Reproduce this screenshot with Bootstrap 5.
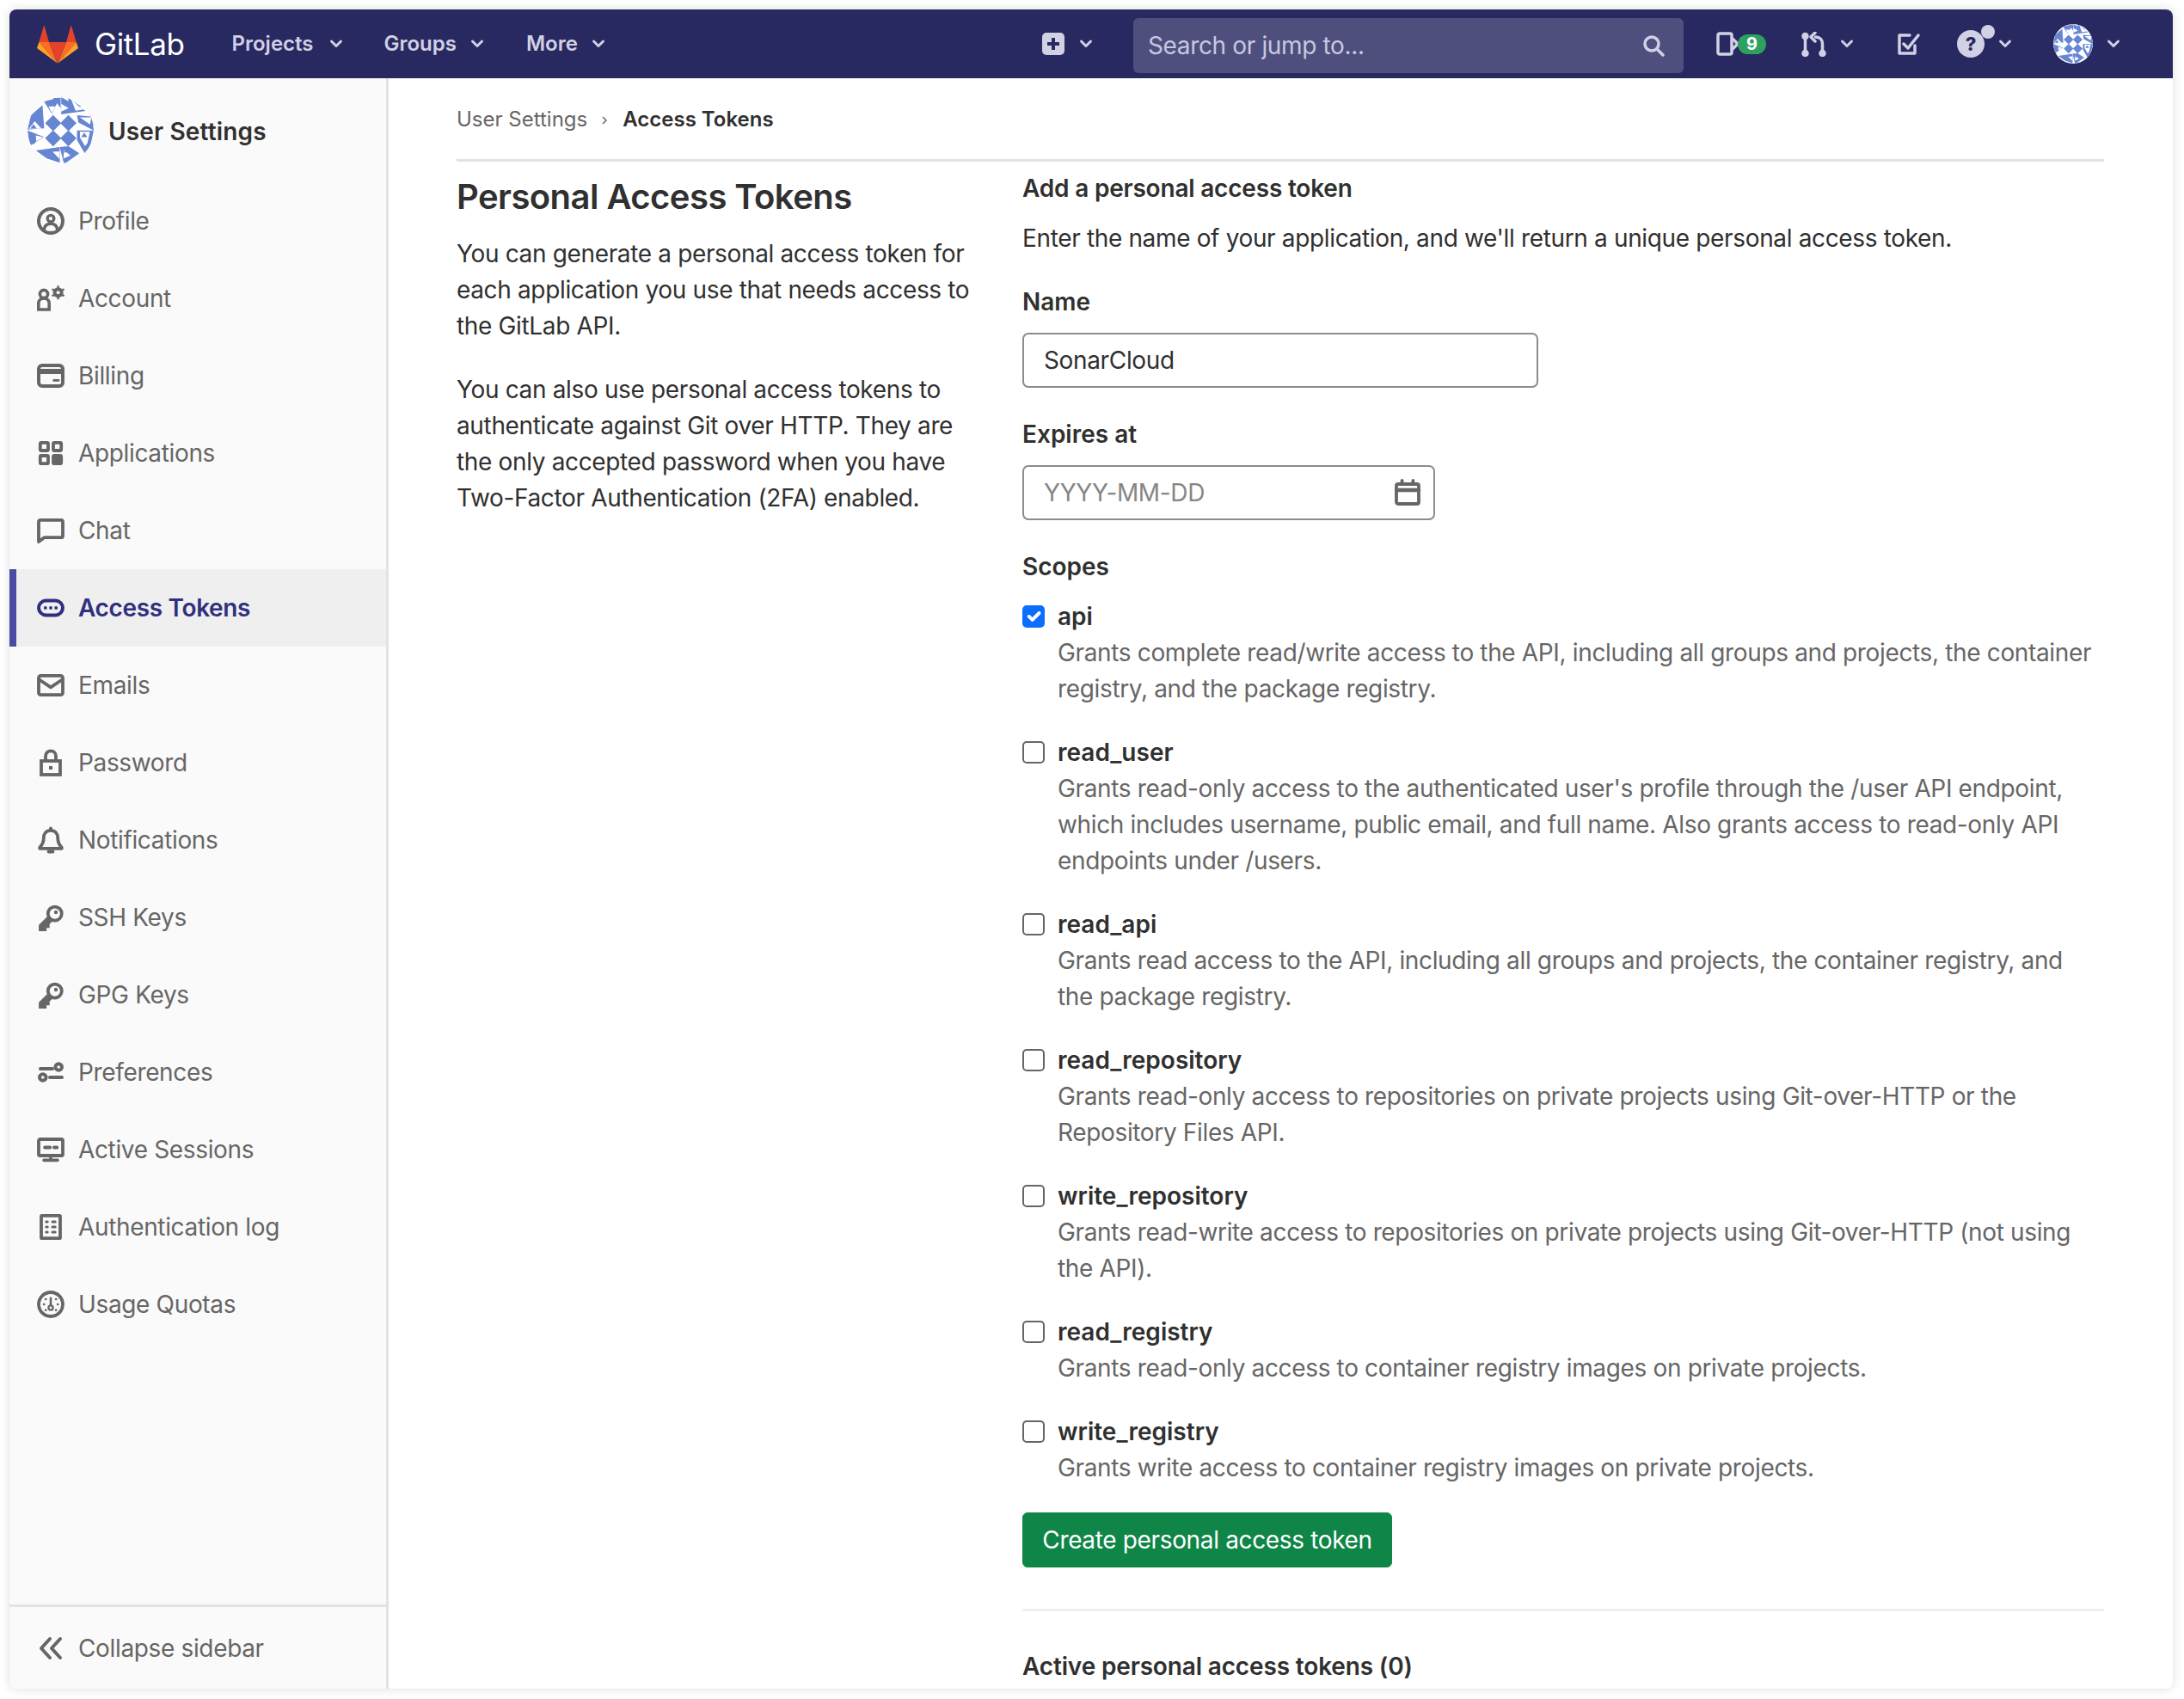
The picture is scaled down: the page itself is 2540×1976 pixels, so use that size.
<!DOCTYPE html>
<html lang="en">
<head>
<meta charset="utf-8">
<title>Personal Access Tokens</title>
<link rel="stylesheet" href="https://cdn.jsdelivr.net/npm/bootstrap@5.3.0/dist/css/bootstrap.min.css">
<style>
html,body{height:100%;margin:0;background:#fff;overflow:hidden}
body{font-family:Inter,"Liberation Sans",sans-serif;font-size:28px;line-height:42px;letter-spacing:-.35px;color:#303030;padding:11px 13px 12px 11px}
.gl-window{height:100%;display:flex;flex-direction:column;background:#fff;border-radius:8px;overflow:hidden;box-shadow:0 0 12px rgba(0,0,0,.14)}
.gl-nav{height:80px;flex:none;background:#292961;color:#d1d0e4;padding:0;flex-wrap:nowrap;justify-content:flex-start;font-size:24px;font-weight:600;line-height:32px;letter-spacing:0}
.gl-brand{display:flex;align-items:center;margin-left:32px;color:#fff;text-decoration:none}
.gl-brand span{font-size:35px;font-weight:400;margin-left:19px;letter-spacing:-.4px}
.gl-menu{display:flex;align-items:center;text-decoration:none;color:#d1d0e4}
.gl-chev{width:16px;height:16px;flex:none;fill:none;stroke:currentColor;stroke-width:3;stroke-linecap:round;stroke-linejoin:round}
.gl-search{width:640px;height:64px;margin-top:4px;background:#4f4f7e;border-radius:6px;display:flex;align-items:center;padding:0 22px 0 17px;flex:none}
.gl-search input{flex:1;min-width:0;border:0;background:transparent;font-size:28px;letter-spacing:-.35px;color:#d1d0e4;padding:0;outline:0}
.gl-search input::placeholder{color:#c8c7e0;opacity:1}
.gl-nicon{fill:none;stroke:currentColor;stroke-linecap:round;stroke-linejoin:round;flex:none}
.gl-badge{width:33px;height:23px;border-radius:12px;background:#2da160;color:#fff;font-size:20px;font-weight:700;line-height:23px;text-align:center;flex:none;position:relative}
.gl-helpdot{position:absolute;left:28px;top:-6px;width:16px;height:16px;border-radius:50%;background:#d1d0e4}
.gl-body{flex:1;min-height:0;display:flex}
.gl-side{width:441px;flex:none;background:#fafafa;border-right:3px solid #e3e3e3;display:flex;flex-direction:column}
.gl-sidehead{height:121px;display:flex;align-items:center;padding:0 0 0 21px;font-weight:600;color:#303030;flex:none;letter-spacing:.15px}
.gl-sidehead span{margin-left:17px;padding-top:2px}
.gl-link{height:90px;display:flex;align-items:center;padding:0 0 0 32px;color:#666;text-decoration:none}
.gl-link svg{width:32px;height:32px;flex:none;margin-right:16px}
.gl-link.gl-on{background:#efefef;color:#303080;font-weight:600;box-shadow:inset 8px 0 0 #4b4ba3}
.gl-foot{margin-top:auto;border-top:3px solid #e3e3e3;height:98px;display:flex;align-items:center;padding-left:32px;color:#666;flex:none}
.gl-foot svg{width:32px;height:32px;margin-right:16px}
.gl-main{flex:1;min-width:0;padding:0 80px 0 79px;overflow:hidden}
.gl-crumb{height:97px;display:flex;align-items:center;font-size:24px;letter-spacing:0;border-bottom:3px solid #e3e3e3;margin:0;line-height:32px;padding-top:1px;flex-wrap:nowrap}
.gl-crumb .breadcrumb-item+.breadcrumb-item{padding-left:0}
.gl-crumb .breadcrumb-item+.breadcrumb-item::before{display:none}
.gl-crumb a{color:#666;text-decoration:none}
.gl-crumb svg{width:12px;height:12px;margin:0 15px 0 14px;fill:none;stroke:#707070;stroke-width:1.6}
.gl-row{--bs-gutter-x:58px}
.gl-title{font-size:40px;line-height:52px;font-weight:600;margin:15px 0 19px;color:#303030;letter-spacing:-.55px}
.gl-left p{margin:0 0 32px}
.gl-h5{font-size:28px;line-height:42px;font-weight:600;margin:10px 0 16px;color:#303030;letter-spacing:-.2px}
.gl-lead{margin:0 0 32px}
.gl-label{display:block;font-weight:600;margin:0 0 15px;line-height:42px;letter-spacing:0}
.gl-input{height:64px;width:600px;font-size:28px;letter-spacing:-.35px;line-height:40px;padding:10px 23px;border:2.5px solid #8c8c8c;border-radius:7px;color:#303030;box-shadow:none}
.gl-input::placeholder{color:#868686;opacity:1}
.gl-date{position:relative;width:480px}
.gl-date .gl-input{width:100%}
.gl-date svg{position:absolute;right:16px;top:16px;width:32px;height:32px}
.gl-group{margin-bottom:33px}
.gl-check{display:block;padding:0 0 0 41px;margin:0 0 32px;min-height:0;line-height:42px}
.gl-check .form-check-input{width:26px;height:26px;margin:8px 0 0 -41px;border:2.5px solid #666;border-radius:5px;float:left;background-size:120%;background-position:center}
.gl-check .form-check-input:checked{background-color:#0d6efd;border-color:#0d6efd}
.gl-check label{font-weight:600;display:block;letter-spacing:0}
.gl-desc{color:#666}
.gl-btn{height:64px;width:430px;padding:0;margin-top:-1px;background:#108548;border-color:#108548;color:#fff;font-size:28px;letter-spacing:-.35px;line-height:40px;border-radius:6px}
.gl-rule{height:3px;background:#efefef;margin:48px 0 43px}
.gl-sub{font-weight:600;margin:0;font-size:28px;line-height:42px;letter-spacing:-.15px}
</style>
</head>
<body>
<svg width="0" height="0" class="d-block position-absolute" aria-hidden="true">
<defs>
<clipPath id="circ"><circle cx="138" cy="137" r="115"/></clipPath>
<symbol id="ava" viewBox="23 22 230 230">
<g clip-path="url(#circ)">
<rect x="23" y="22" width="230" height="230" fill="#fff"/>
<g fill="#6685d3">
<path d="M112 84l28 28-28 28-28-28zM165 84l28 28-28 28-28-28zM112 137l28 28-28 28-28-28zM165 137l28 28-28 28-28-28z"/>
<path d="M80 37l55-14-27 57zM112 25h26v35z"/>
<path d="M140 22l85 48-85 12zM165 25l45 30-45 10z"/>
<path d="M195 85l55 5 3 48-53-28z"/>
<path d="M195 138h58l-13 60-15 25-30-52z"/>
<path d="M165 192l38 25-53 38-15-60z"/>
<path d="M52 207l83-12v55l-45-15z"/>
<path d="M23 138l57 22-50 32z"/>
<path d="M75 50l6 80-58 5 12-50z"/>
<path d="M30 165l25 0-10 22z"/>
</g>
<g fill="#fff">
<path d="M96 54h24l-12 24z"/>
<path d="M140 45l26 15-26 12z"/>
<path d="M28 132l20-26 24 26z"/>
<path d="M205 142h35l-9 40-8 10-18-30z"/>
<path d="M110 212l24-2 0 26z"/>
<path d="M150 205l22 20-24 10z"/>
<path d="M175 30l40 35-25 4z"/>
<path d="M205 92l40 0-5 25z"/>
<path d="M52 155l25 6-24 15z"/>
</g>
<g fill="#6685d3">
<path d="M44 115l11 16H33zM220 145l11 16h-22zM160 196l11 18h-22z"/>
</g>
</g>
</symbol>
<symbol id="i-chev-d" viewBox="0 0 16 16"><path d="M2.500 5L8 10.500 13.500 5"/></symbol>
</defs>
</svg>
<div class="gl-window">
<nav class="navbar gl-nav">
  <a class="gl-brand" href="#">
    <svg width="48" height="45" viewBox="0 0 48 45" class="flex-none">
      <path d="M8.300 0L14 20H2.300zM39.700 0L34 20h11.700z" fill="#e24329"/>
      <path d="M2.300 20H14l9.700 24.500z" fill="#fc6d26"/><path d="M45.700 20H34L24.300 44.500z" fill="#fc6d26"/>
      <path d="M2.300 20L0 27l23.700 17.500z" fill="#fca326"/><path d="M45.700 20l2.300 7-23.700 17.500z" fill="#fca326"/>
      <path d="M14 20h20L24 44.800z" fill="#e24329"/>
    </svg>
    <span>GitLab</span>
  </a>
  <a class="gl-menu" href="#" style="margin-left:55px">Projects<svg class="gl-chev" style="margin-left:18px" viewBox="0 0 16 16"><use href="#i-chev-d"/></svg></a>
  <a class="gl-menu" href="#" style="margin-left:48px">Groups<svg class="gl-chev" style="margin-left:16px" viewBox="0 0 16 16"><use href="#i-chev-d"/></svg></a>
  <a class="gl-menu" href="#" style="margin-left:49px">More<svg class="gl-chev" style="margin-left:16px" viewBox="0 0 16 16"><use href="#i-chev-d"/></svg></a>

  <svg class="flex-none" width="26" height="26" viewBox="0 0 26 26" style="margin-left:508px"><rect width="26" height="26" rx="5" fill="#d1d0e4"/><path d="M13 6v14M6 13h14" stroke="#292961" stroke-width="4"/></svg>
  <svg class="gl-chev" style="margin-left:17px" viewBox="0 0 16 16"><use href="#i-chev-d"/></svg>

  <div class="gl-search" style="margin-left:47px">
    <input type="text" placeholder="Search or jump to..." aria-label="Search">
    <svg class="gl-nicon" width="26" height="26" viewBox="0 0 26 26" stroke-width="3.500"><circle cx="11" cy="11" r="8"/><path d="M17 17l7 7"/></svg>
  </div>

  <svg class="gl-nicon" style="margin-left:38px" width="27" height="28" viewBox="0 0 27 28" stroke-width="3.500"><rect x="2" y="2" width="16" height="24" rx="2"/><path d="M19 8l6 6-6 6"/></svg>
  <span class="gl-badge" style="margin-left:-2px">9</span>
  <svg class="gl-nicon" style="margin-left:41px" width="29" height="29" viewBox="0 0 29 29" stroke-width="3.500"><circle cx="4.500" cy="5" r="2.500" fill="currentColor"/><circle cx="4.500" cy="25" r="2.500" fill="currentColor"/><circle cx="24.500" cy="25" r="2.500" fill="currentColor"/><path d="M4.500 7v16M24.500 23v-9c0-5-3-8-8-8"/><path d="M16 1l-5 5 5 5"/></svg>
  <svg class="gl-chev" style="margin-left:16px" viewBox="0 0 16 16"><use href="#i-chev-d"/></svg>
  <svg class="gl-nicon" style="margin-left:50px" width="27" height="26" viewBox="0 0 27 26" stroke-width="3.500"><path d="M15 3H3v21h18V15"/><path d="M8 13l5 5L25 3"/></svg>
  <span class="position-relative d-block flex-none" style="margin-left:43px;width:32px;height:32px">
    <svg width="32" height="32" viewBox="0 0 32 32" class="d-block"><circle cx="16" cy="16" r="16" fill="#d1d0e4"/><text x="16" y="24" text-anchor="middle" font-size="22" font-weight="800" fill="#292961" font-family="Inter">?</text></svg>
    <span class="gl-helpdot"></span>
  </span>
  <svg class="gl-chev" style="margin-left:16px" viewBox="0 0 16 16"><use href="#i-chev-d"/></svg>
  <svg class="flex-none" style="margin-left:48px" width="46" height="46"><use href="#ava"/></svg>
  <svg class="gl-chev" style="margin-left:16px" viewBox="0 0 16 16"><use href="#i-chev-d"/></svg>
</nav>

<div class="gl-body">
<aside class="gl-side">
  <div class="gl-sidehead"><svg width="77" height="77" class="flex-none"><use href="#ava"/></svg><span>User Settings</span></div>
  <a class="gl-link" href="#"><svg class="gl-nicon" viewBox="0 0 16 16" stroke-width="2"><circle cx="8" cy="8" r="7"/><circle cx="8" cy="6.600" r="1.900" stroke-width="1.700"/><path d="M4.200 12.800c.3-2.400 1.700-3.200 3.800-3.200s3.500.8 3.800 3.200" stroke-width="1.800"/></svg>Profile</a>
  <a class="gl-link" href="#"><svg class="gl-nicon" viewBox="0 0 16 16" stroke-width="1.800"><circle cx="4" cy="5.500" r="2.300"/><path d="M.9 14.500v-3.500c0-2 1.300-3 3.100-3s3.100 1 3.100 3v3.500z" stroke-linejoin="miter"/><circle cx="12.300" cy="4.600" r="3" fill="currentColor" stroke="none"/><path d="M12.300 .6v8M8.800 2.600l7 4M15.800 2.600l-7 4" stroke-width="1.200" stroke-linecap="butt"/><circle cx="12.300" cy="4.600" r="1" fill="#fafafa" stroke="none"/></svg>Account</a>
  <a class="gl-link" href="#"><svg class="gl-nicon" viewBox="0 0 16 16" stroke-width="2"><rect x="1" y="2" width="14" height="12" rx="2"/><path d="M1 5.500h14" stroke-width="3"/><path d="M9.800 10.700h2.800" stroke-width="1.300"/></svg>Billing</a>
  <a class="gl-link" href="#"><svg class="gl-nicon" viewBox="0 0 16 16" stroke-width="1.900"><rect x="1.900" y="1.900" width="4.600" height="4.600" rx=".6"/><rect x="9.500" y="1.900" width="4.600" height="4.600" rx=".6"/><rect x="1.900" y="9.500" width="4.600" height="4.600" rx=".6"/><rect x="9.500" y="9.500" width="4.600" height="4.600" rx=".6" fill="currentColor"/></svg>Applications</a>
  <a class="gl-link" href="#"><svg class="gl-nicon" viewBox="0 0 16 16" stroke-width="1.900"><path d="M2 1.900h12a1 1 0 0 1 1 1v8.200a1 1 0 0 1-1 1H4.200L1 14.500V2.900a1 1 0 0 1 1-1z"/></svg>Chat</a>
  <a class="gl-link gl-on" href="#"><svg class="gl-nicon" viewBox="0 0 16 16" stroke-width="2"><rect x="1" y="3.800" width="14" height="8.400" rx="4.200"/><circle cx="4.900" cy="8" r=".95" fill="currentColor" stroke="none"/><circle cx="8" cy="8" r=".95" fill="currentColor" stroke="none"/><circle cx="11.100" cy="8" r=".95" fill="currentColor" stroke="none"/></svg>Access Tokens</a>
  <a class="gl-link" href="#"><svg class="gl-nicon" viewBox="0 0 16 16" stroke-width="1.900"><rect x="1" y="2.400" width="14" height="11.200" rx="1.200"/><path d="M1.200 4.600L8 9.200l6.800-4.600"/></svg>Emails</a>
  <a class="gl-link" href="#"><svg class="gl-nicon" viewBox="0 0 16 16" stroke-width="1.900"><rect x="2.500" y="7" width="11" height="8" stroke-linejoin="miter"/><path d="M5 6.500V4.200a3 3 0 0 1 6 0v2.300" stroke-linecap="butt"/><rect x="7" y="10" width="2" height="2" fill="currentColor" stroke="none"/></svg>Password</a>
  <a class="gl-link" href="#"><svg class="gl-nicon" viewBox="0 0 16 16" stroke-width="1.900"><path d="M8 2.400c-2.700 0-4.100 2-4.100 4.400 0 3-1 4.300-2.300 5.500v.6h12.800v-.6c-1.300-1.200-2.300-2.500-2.300-5.500 0-2.400-1.400-4.400-4.100-4.400z"/><path d="M8 1.200v1M6.800 14.800h2.400" stroke-width="2"/></svg>Notifications</a>
  <a class="gl-link" href="#"><svg class="gl-nicon" viewBox="0 0 16 16" stroke-width="1.900"><circle cx="10.400" cy="5.800" r="4"/><circle cx="11" cy="5" r="1.100" fill="currentColor" stroke="none"/><path d="M6.800 8L2 12.800V15h2.600v-1.800h1.800v-1.800l2-1.800" stroke-linejoin="miter" fill="currentColor"/></svg>SSH Keys</a>
  <a class="gl-link" href="#"><svg class="gl-nicon" viewBox="0 0 16 16" stroke-width="1.900"><circle cx="10.400" cy="5.800" r="4"/><circle cx="11" cy="5" r="1.100" fill="currentColor" stroke="none"/><path d="M6.800 8L2 12.800V15h2.600v-1.800h1.800v-1.800l2-1.800" stroke-linejoin="miter" fill="currentColor"/></svg>GPG Keys</a>
  <a class="gl-link" href="#"><svg class="gl-nicon" viewBox="0 0 16 16" stroke-width="2"><path d="M2 6h7M7.500 11H14.500"/><circle cx="12.600" cy="5" r="1.900"/><circle cx="3.400" cy="11" r="1.900"/></svg>Preferences</a>
  <a class="gl-link" href="#"><svg class="gl-nicon" viewBox="0 0 16 16" stroke-width="1.900"><rect x="1" y="2" width="14" height="9.500" rx=".8"/><path d="M4.600 6.700h3M10 6.700h1.600" stroke-width="2"/><path d="M8 11.600v2M4 14.200h8" stroke-width="1.800"/></svg>Active Sessions</a>
  <a class="gl-link" href="#"><svg class="gl-nicon" viewBox="0 0 16 16" stroke-width="1.900"><rect x="2.500" y="1.400" width="11" height="13.200" rx=".4"/><path d="M5.400 5h.7M9 5h1.600M5.400 8h.7M9 8h1.600M5.400 11h.7M9 11h1.600" stroke-width="1.500"/></svg>Authentication log</a>
  <a class="gl-link" href="#"><svg class="gl-nicon" viewBox="0 0 16 16" stroke-width="1.900"><circle cx="8" cy="8" r="7"/><circle cx="8" cy="10" r="1.300" stroke-width="1.200"/><path d="M8 4.400v4" stroke-width="1.300"/><path d="M4 8h.2M12 8h.2M5 5h.2M11 5h.2M5 11.400h.2M11 11.400h.2" stroke-width="1.200"/></svg>Usage Quotas</a>
  <div class="gl-foot"><svg class="gl-nicon" viewBox="0 0 16 16" stroke-width="2"><path d="M7.500 2.500L2.500 8l5 5.500M13.500 2.500L8.500 8l5 5.500"/></svg>Collapse sidebar</div>
</aside>

<main class="gl-main">
  <ol class="breadcrumb gl-crumb">
    <li class="breadcrumb-item"><a href="#">User Settings</a><svg viewBox="0 0 12 12"><path d="M4 2l4 4-4 4"/></svg></li>
    <li class="breadcrumb-item active fw-semibold"><span style="color:#303030">Access Tokens</span></li>
  </ol>
  <div class="row gl-row">
    <div class="col-4 gl-left">
      <h4 class="gl-title">Personal Access Tokens</h4>
      <p>You can generate a personal access token for each application you use that needs access to the GitLab API.</p>
      <p>You can also use personal access tokens to authenticate against Git over HTTP. They are the only accepted password when you have Two-Factor Authentication (2FA) enabled.</p>
    </div>
    <div class="col-8">
      <h5 class="gl-h5">Add a personal access token</h5>
      <p class="gl-lead">Enter the name of your application, and we'll return a unique personal access token.</p>
      <form>
        <div class="gl-group"><label class="gl-label" for="nm">Name</label><input id="nm" class="form-control gl-input" type="text" value="SonarCloud"></div>
        <div class="gl-group"><label class="gl-label" for="ex">Expires at</label>
          <div class="gl-date"><input id="ex" class="form-control gl-input" type="text" placeholder="YYYY-MM-DD">
          <svg class="gl-nicon" viewBox="0 0 16 16" stroke-width="1.900" color="#666"><rect x="1.500" y="3" width="13" height="11.500" rx="1"/><path d="M1.500 6.500h13" stroke-width="2.200"/><path d="M4.800 1v2M11.200 1v2" stroke-width="1.900"/></svg></div>
        </div>
        <label class="gl-label" style="margin-bottom:16px">Scopes</label>
        <div class="form-check gl-check"><input class="form-check-input" type="checkbox" id="s1" checked><label for="s1">api</label><div class="gl-desc">Grants complete read/write access to the API, including all groups and projects, the container registry, and the package registry.</div></div>
        <div class="form-check gl-check"><input class="form-check-input" type="checkbox" id="s2"><label for="s2">read_user</label><div class="gl-desc">Grants read-only access to the authenticated user's profile through the /user API endpoint, which includes username, public email, and full name. Also grants access to read-only API endpoints under /users.</div></div>
        <div class="form-check gl-check"><input class="form-check-input" type="checkbox" id="s3"><label for="s3">read_api</label><div class="gl-desc">Grants read access to the API, including all groups and projects, the container registry, and the package registry.</div></div>
        <div class="form-check gl-check"><input class="form-check-input" type="checkbox" id="s4"><label for="s4">read_repository</label><div class="gl-desc">Grants read-only access to repositories on private projects using Git-over-HTTP or the Repository Files API.</div></div>
        <div class="form-check gl-check"><input class="form-check-input" type="checkbox" id="s5"><label for="s5">write_repository</label><div class="gl-desc">Grants read-write access to repositories on private projects using Git-over-HTTP (not using the API).</div></div>
        <div class="form-check gl-check"><input class="form-check-input" type="checkbox" id="s6"><label for="s6">read_registry</label><div class="gl-desc">Grants read-only access to container registry images on private projects.</div></div>
        <div class="form-check gl-check"><input class="form-check-input" type="checkbox" id="s7"><label for="s7">write_registry</label><div class="gl-desc">Grants write access to container registry images on private projects.</div></div>
        <button type="button" class="btn btn-success gl-btn">Create personal access token</button>
      </form>
      <div class="gl-rule"></div>
      <h5 class="gl-sub">Active personal access tokens (0)</h5>
    </div>
  </div>
</main>
</div>
</div>
</body>
</html>
